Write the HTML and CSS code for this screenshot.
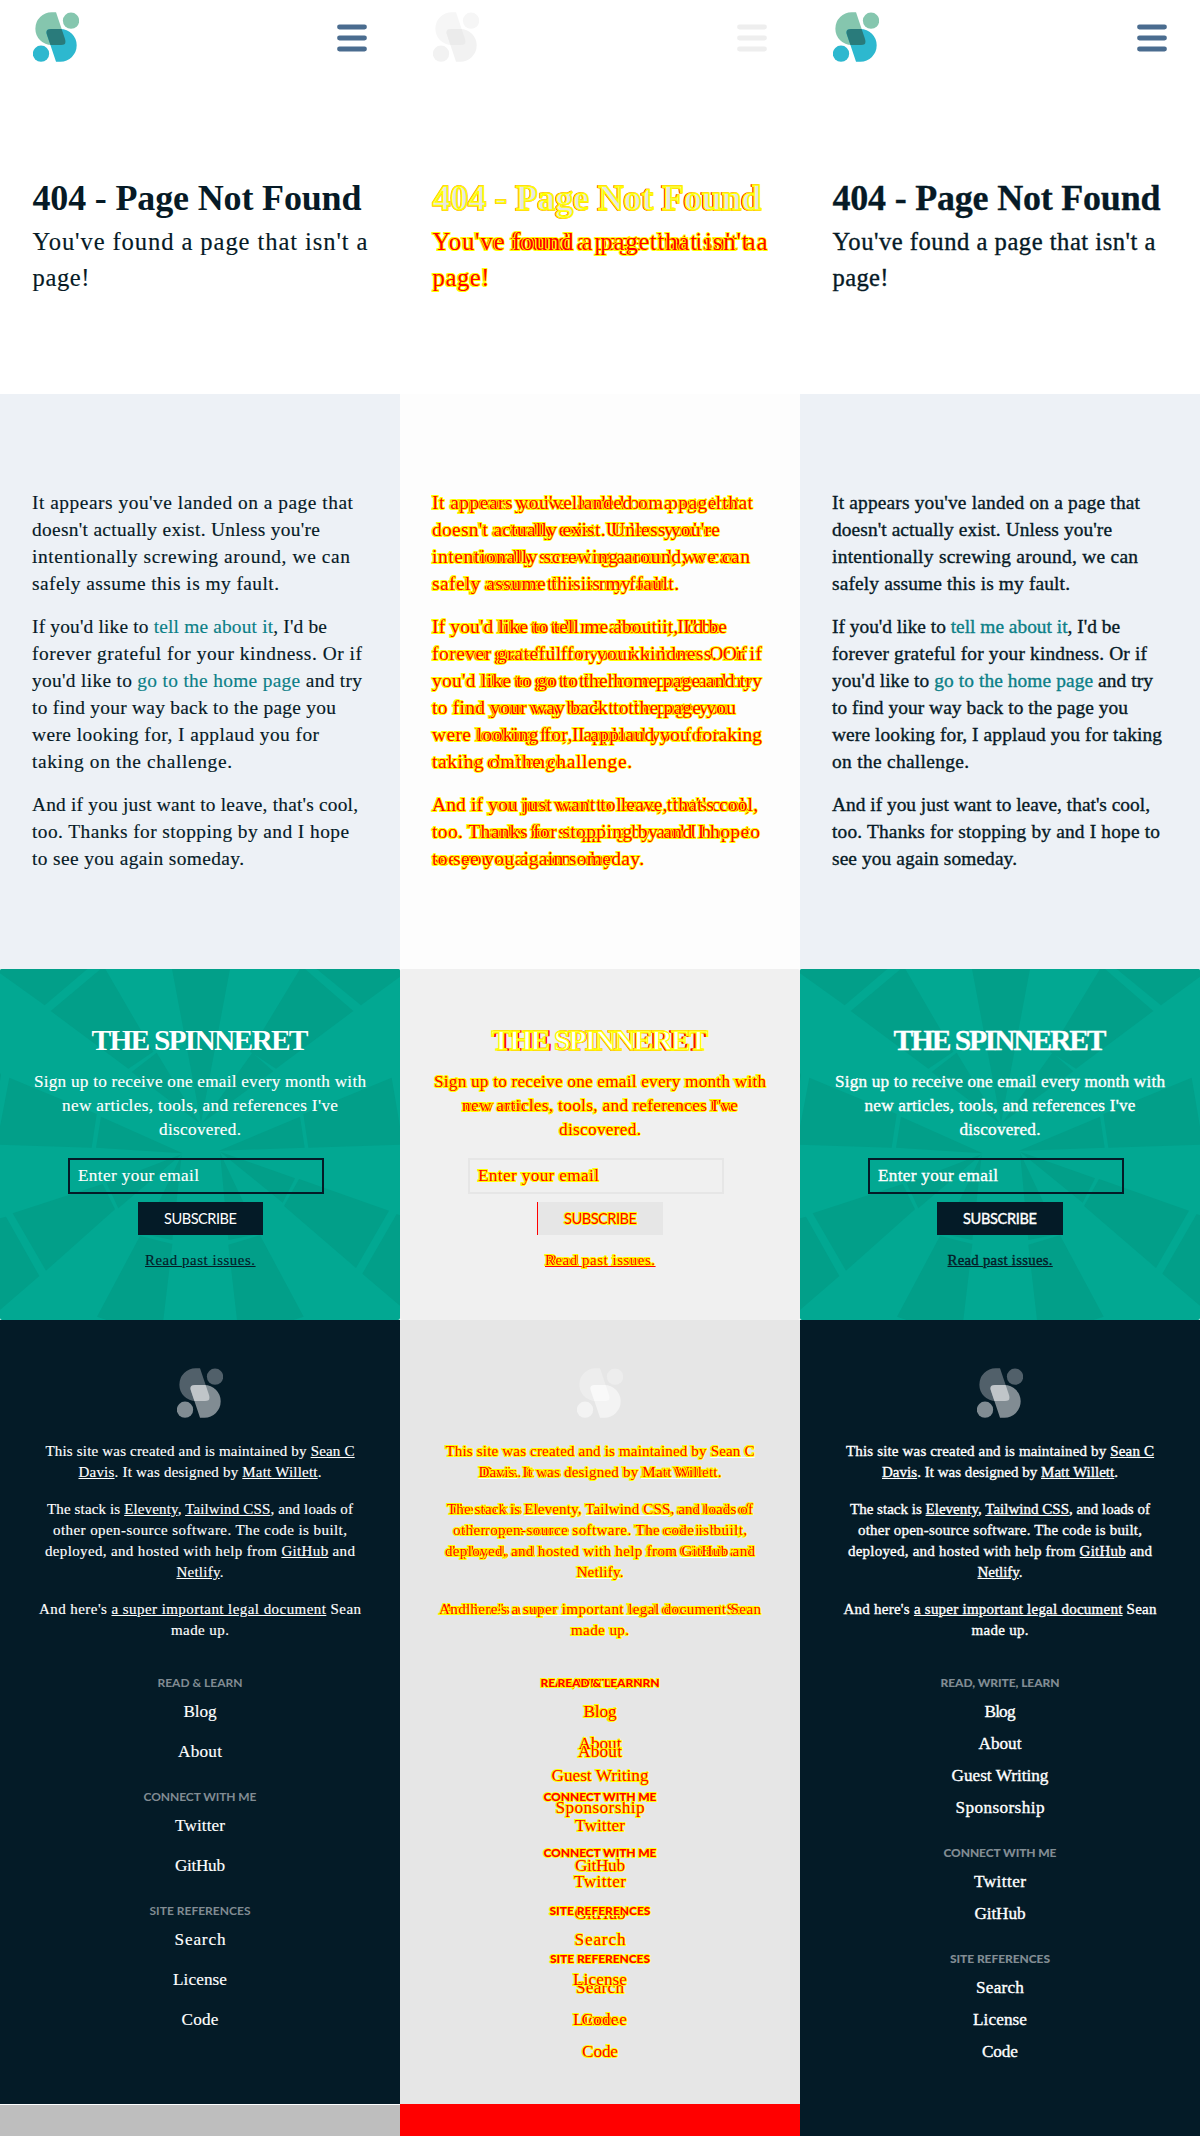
FILE: index.html
```html
<!DOCTYPE html>
<html lang="en">
<head>
<meta charset="utf-8">
<title>404 - Page Not Found</title>
<link rel="stylesheet" href="styles.css">
</head>
<body>
<svg class="defs" aria-hidden="true">
  <defs>
    <path id="lobe-a" d="M168 38H155A49 49 0 0 0 155 136H183Q200 136 196 121Z"/>
    <path id="lobe-b" d="M168 186H181A49 49 0 0 0 181 88H153Q136 88 140 103Z"/>
    <clipPath id="overlap"><use href="#lobe-a"/></clipPath>
  </defs>
  <symbol id="logo" viewBox="99 37 139 150">
    <use href="#lobe-a" class="tone-a"/><circle cx="213" cy="63" r="24.5" class="tone-a"/>
    <use href="#lobe-b" class="tone-b"/><circle cx="123" cy="162" r="24.5" class="tone-b"/>
    <g clip-path="url(#overlap)"><use href="#lobe-b" class="tone-c"/></g>
  </symbol>
  <symbol id="menu" viewBox="0 0 30 28">
    <path d="M2.5 3H27.5M2.5 14H27.5M2.5 25H27.5" fill="none" stroke="currentColor" stroke-width="4.8" stroke-linecap="round"/>
  </symbol>
  <symbol id="rays" viewBox="0 27 1200 1053" preserveAspectRatio="none">
    <path d="M516 27H690L603 488Z M0 27H262L134 136L0 40Z M302 27H316L460 275L385 326L152 153Z M395 336L470 278L597 488Z
      M950 27H1200V50L1083 136Z M900 27H915L1060 153L828 326L750 275Z M757 278L820 334L607 488Z
      M28 353L290 462L275 563L0 554V500Z M303 470L548 580L288 563Z M0 338L3 345L0 362Z
      M1175 353L910 462L925 563L1200 554V500Z M900 470L657 572L914 563Z
      M545 583L320 670L355 745Z M308 672L345 748L138 932L38 760Z M0 775L18 770L118 948L0 1050Z
      M660 575L885 655L848 728Z M897 657L1167 752L1068 924L852 738Z M1190 762L1200 766V1037L1087 941Z
      M545 585L430 822L517 840Z M420 828L517 852L490 1080H320L291 1070Z
      M660 578L775 822L685 840Z M685 854L780 826L911 1070L880 1080H711Z"/>
  </symbol>
</svg>

<div class="compare">
  <main class="panel before" id="before">
    <header class="top"><svg class="logo"><use href="#logo"/></svg><svg class="menu"><use href="#menu"/></svg></header>
    <section class="hero">
      <h1><span data-w="329">404 - Page Not Found</span></h1>
      <p><span data-w="335">You've found a page that isn't a</span><span data-w="57">page!</span></p>
    </section>
    <section class="message">
      <p><span data-w="321">It appears you've landed on a page that</span><span data-w="288">doesn't actually exist. Unless you're</span><span data-w="318">intentionally screwing around, we can</span><span data-w="247">safely assume this is my fault.</span></p>
      <p><span data-w="295">If you'd like to <a>tell me about it</a>, I'd be</span><span data-w="330">forever grateful for your kindness. Or if</span><span data-w="330">you'd like to <a>go to the home page</a> and try</span><span data-w="304">to find your way back to the page you</span><span data-w="287">were looking for, I applaud you for</span><span data-w="200">taking on the challenge.</span></p>
      <p><span data-w="326">And if you just want to leave, that's cool,</span><span data-w="317">too. Thanks for stopping by and I hope</span><span data-w="212">to see you again someday.</span></p>
    </section>
    <section class="newsletter">
      <svg class="rays"><use href="#rays"/></svg>
      <h2><span data-w="217">THE SPINNERET</span></h2>
      <p><span data-w="332">Sign up to receive one email every month with</span><span data-w="276">new articles, tools, and references I've</span><span data-w="82">discovered.</span></p>
      <div class="field"><span data-w="121">Enter your email</span></div>
      <div class="button"><span data-w="73">SUBSCRIBE</span></div>
      <div class="past"><span data-w="110"><u>Read past issues.</u></span></div>
    </section>
    <footer class="foot">
      <svg class="logo"><use href="#logo"/></svg>
      <div class="credits">
        <p><span data-w="309">This site was created and is maintained by <u>Sean C</u></span><span data-w="243"><u>Davis</u>. It was designed by <u>Matt Willett</u>.</span></p>
        <p><span data-w="306">The stack is <u>Eleventy</u>, <u>Tailwind CSS</u>, and loads of</span><span data-w="294">other open-source software. The code is built,</span><span data-w="310">deployed, and hosted with help from <u>GitHub</u> and</span><span data-w="47"><u>Netlify</u>.</span></p>
        <p><span data-w="322">And here's <u>a super important legal document</u> Sean</span><span data-w="58">made up.</span></p>
      </div>
      <nav>
        <section><h3><span data-w="85">READ &amp; LEARN</span></h3><ul><li><span data-w="33">Blog</span></li><li><span data-w="44">About</span></li></ul></section>
        <section><h3><span data-w="113">CONNECT WITH ME</span></h3><ul><li><span data-w="50">Twitter</span></li><li><span data-w="50">GitHub</span></li></ul></section>
        <section><h3><span data-w="101">SITE REFERENCES</span></h3><ul><li><span data-w="51">Search</span></li><li><span data-w="54">License</span></li><li><span data-w="37">Code</span></li></ul></section>
      </nav>
    </footer>
    <div class="shortfall"></div>
  </main>

  <div class="panel diff" id="diff"></div>

  <main class="panel after" id="after">
    <header class="top"><svg class="logo"><use href="#logo"/></svg><svg class="menu"><use href="#menu"/></svg></header>
    <section class="hero">
      <h1><span data-w="328">404 - Page Not Found</span></h1>
      <p><span data-w="323">You've found a page that isn't a</span><span data-w="56">page!</span></p>
    </section>
    <section class="message">
      <p><span data-w="308">It appears you've landed on a page that</span><span data-w="280">doesn't actually exist. Unless you're</span><span data-w="306">intentionally screwing around, we can</span><span data-w="238">safely assume this is my fault.</span></p>
      <p><span data-w="288">If you'd like to <a>tell me about it</a>, I'd be</span><span data-w="315">forever grateful for your kindness. Or if</span><span data-w="321">you'd like to <a>go to the home page</a> and try</span><span data-w="296">to find your way back to the page you</span><span data-w="330">were looking for, I applaud you for taking</span><span data-w="137">on the challenge.</span></p>
      <p><span data-w="318">And if you just want to leave, that's cool,</span><span data-w="328">too. Thanks for stopping by and I hope to</span><span data-w="185">see you again someday.</span></p>
    </section>
    <section class="newsletter">
      <svg class="rays"><use href="#rays"/></svg>
      <h2><span data-w="213">THE SPINNERET</span></h2>
      <p><span data-w="330">Sign up to receive one email every month with</span><span data-w="271">new articles, tools, and references I've</span><span data-w="81">discovered.</span></p>
      <div class="field"><span data-w="120">Enter your email</span></div>
      <div class="button"><span data-w="74">SUBSCRIBE</span></div>
      <div class="past"><span data-w="105"><u>Read past issues.</u></span></div>
    </section>
    <footer class="foot">
      <svg class="logo"><use href="#logo"/></svg>
      <div class="credits">
        <p><span data-w="308">This site was created and is maintained by <u>Sean C</u></span><span data-w="236"><u>Davis</u>. It was designed by <u>Matt Willett</u>.</span></p>
        <p><span data-w="300">The stack is <u>Eleventy</u>, <u>Tailwind CSS</u>, and loads of</span><span data-w="284">other open-source software. The code is built,</span><span data-w="304">deployed, and hosted with help from <u>GitHub</u> and</span><span data-w="45"><u>Netlify</u>.</span></p>
        <p><span data-w="313">And here's <u>a super important legal document</u> Sean</span><span data-w="57">made up.</span></p>
      </div>
      <nav>
        <section><h3><span data-w="119">READ, WRITE, LEARN</span></h3><ul><li><span data-w="31">Blog</span></li><li><span data-w="43">About</span></li><li><span data-w="97">Guest Writing</span></li><li><span data-w="89">Sponsorship</span></li></ul></section>
        <section><h3><span data-w="113">CONNECT WITH ME</span></h3><ul><li><span data-w="52">Twitter</span></li><li><span data-w="51">GitHub</span></li></ul></section>
        <section><h3><span data-w="100">SITE REFERENCES</span></h3><ul><li><span data-w="48">Search</span></li><li><span data-w="54">License</span></li><li><span data-w="36">Code</span></li></ul></section>
      </nav>
    </footer>
  </main>
</div>
<script src="compare.js"></script>
</body>
</html>
```
FILE: styles.css
```css
* { box-sizing: border-box; }
body { margin: 0; background: #fff; font-family: "Liberation Serif", serif; color: #061a26; }
h1, h2, h3, p, ul { margin: 0; padding: 0; }
ul { list-style: none; }
svg { display: block; }
.defs { position: absolute; width: 0; height: 0; }
.compare { display: grid; grid-template-columns: repeat(3, 400px); height: 2136px; overflow: hidden; }
[data-w] { display: block; width: max-content; white-space: nowrap; }

.panel { --logo-a: #85c6ae; --logo-b: #2db8cf; --logo-c: #297b7b; display: flex; flex-direction: column; height: 2136px; min-width: 0; }
.tone-a { fill: var(--logo-a); }
.tone-b { fill: var(--logo-b); }
.tone-c { fill: var(--logo-c); }
.logo { width: 46.4px; height: 50px; flex: none; }

.top { height: 76px; padding: 12.4px 33px 0 32.5px; display: flex; justify-content: space-between; }
.menu { width: 30px; height: 28px; margin: 11.8px 0 0; color: #4a6c8f; }
.hero { height: 318px; padding: 104px 32.5px 0; }
.hero h1 { font-size: 36px; line-height: 36px; margin-bottom: 8px; }
.hero p { font-size: 24.6px; line-height: 36px; }

.message { height: 575px; padding: 95px 32px 0; background: #edf1f6; font-size: 19.4px; line-height: 27px; }
.message p + p { margin-top: 16px; }
.message a { color: #0b7f87; }

.newsletter { position: relative; height: 351px; padding-top: 53px; display: flex; flex-direction: column; align-items: center; background: #02a892; border-radius: 2px; overflow: hidden; color: #fff; }
.newsletter > * { position: relative; }
.newsletter .rays { position: absolute; inset: 0; width: 400px; height: 351px; fill: #029f89; }
.newsletter h2 { font-size: 29.5px; line-height: 36px; }
.newsletter p { margin-top: 12px; font-size: 17.2px; line-height: 24px; display: flex; flex-direction: column; align-items: center; }
.field { width: 256px; height: 36px; margin: 16px 8px 0 0; border: 2px solid #041b27; padding-left: 8px; font-size: 17.2px; line-height: 32px; }
.button { width: 126px; height: 33px; margin-top: 8px; background: #041b27; display: flex; justify-content: center; font: 14.6px/34px Lato, sans-serif; }
.before .button, .diff .button { width: 125px; margin-left: 1px; }
.diff .below .button { width: 126px; margin-left: 0; }
.past { margin-top: 15px; font-size: 14.8px; line-height: 21px; color: #041b27; }

.foot { --logo-a: #51606a; --logo-b: #818c93; --logo-c: #c0c5c9; height: 784px; padding-top: 48px; display: flex; flex-direction: column; align-items: center; background: #041b27; color: #fff; }
.after .foot { height: 816px; }
.credits { margin-top: 23px; font-size: 15px; line-height: 21px; display: flex; flex-direction: column; gap: 16px; }
.credits p { display: flex; flex-direction: column; align-items: center; }
.foot nav { margin-top: 33px; display: flex; flex-direction: column; gap: 24px; }
.foot section, .foot ul { display: flex; flex-direction: column; align-items: center; }
.foot h3 { margin-bottom: 8px; font: 900 12px/18px Lato, sans-serif; color: #818c93; }
.before h3 { font-weight: 700; }
.foot ul { gap: 16px; font-size: 17.2px; line-height: 24px; }
.after .foot ul, .below .foot ul { gap: 8px; }
.before p, .before .field, .before .past, .before li { -webkit-text-stroke: 0.15px currentColor; }
.after p, .after .field, .after .past, .after li, .after .button { -webkit-text-stroke: 0.35px currentColor; }
.after h1, .after h2 { -webkit-text-stroke: 0.3px currentColor; }
.shortfall { height: 32px; border-top: 1px solid #fff; background: #bebebe; }

/* Difference view: both versions stacked, changed pixels in red and yellow */
.diff { display: grid; --logo-a: #f6f6f6; --logo-b: #f2f2f2; --logo-c: #ebebeb; }
.layer { grid-area: 1 / 1; display: flex; flex-direction: column; }
.diff [data-w], .diff [data-w] a { color: #f00; -webkit-text-stroke: 1.9px #ff0; paint-order: stroke fill; }
.diff h1 [data-w] { color: #e6e6e6; -webkit-text-stroke: 1.6px #ff0; paint-order: normal; }
.diff h2 [data-w] { color: #fff; -webkit-text-stroke: 1.3px #ff0; paint-order: normal; }
.diff .below h1 [data-w], .diff .below h2 [data-w] { color: #f00; -webkit-text-stroke-color: #f00; }
.diff .menu { color: #eee; }
.diff .rays { display: none; }
.diff .foot { --logo-a: #ededed; --logo-b: #f3f3f3; --logo-c: #f9f9f9; }
.diff u { text-decoration-color: #fff; text-decoration-thickness: 1px; }
.diff .past u { text-decoration-color: #f00; }
.diff .field { border-color: #e6e6e6; }
.below .message { background: #fdfdfd; }
.below .newsletter { background: #f0f0f0; }
.below .foot { background: #e6e6e6; }
.below .button { background: #f00; }
.above .message, .above .newsletter, .above .foot { background: none; }
.above .button { background: #e6e6e6; }
.above .logo, .above .menu { visibility: hidden; }
.above .shortfall { background: #f00; border-color: #f00; }
```
FILE: compare.js
```js
// Build the difference panel by stacking copies of both versions.
const diff = document.getElementById('diff');
[['after', 'below'], ['before', 'above']].forEach(([id, place]) => {
  const layer = document.createElement('div');
  layer.className = 'layer ' + place;
  [...document.getElementById(id).children].forEach(n => layer.append(n.cloneNode(true)));
  diff.append(layer);
});

// Track each line of text out to its set width.
document.querySelectorAll('[data-w]').forEach(line => {
  const count = line.textContent.length;
  let spacing = 0.01;
  line.style.letterSpacing = spacing + 'px';
  const width = line.getBoundingClientRect().width;
  spacing += (Number(line.dataset.w) - width) / (count - 1);
  line.style.letterSpacing = spacing.toFixed(3) + 'px';
  line.style.marginRight = (-spacing).toFixed(3) + 'px';
});
```
